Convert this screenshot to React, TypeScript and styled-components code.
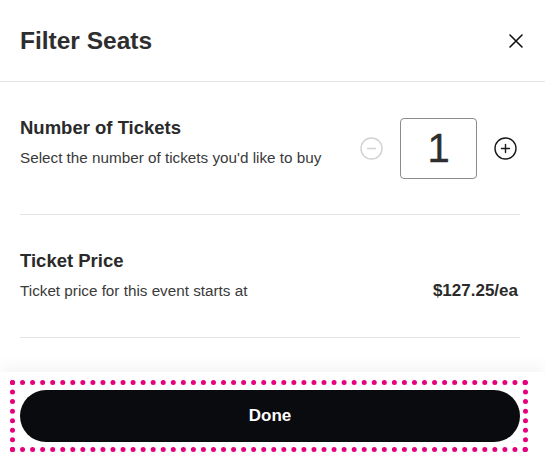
import React, { useState } from 'react';
import styled, { createGlobalStyle } from 'styled-components';

const GlobalStyle = createGlobalStyle`
  html, body {
    margin: 0;
    padding: 0;
    background: #ffffff;
  }
  body {
    font-family: "Liberation Sans", Arial, sans-serif;
    color: #262626;
  }
`;

const Page = styled.div`
  display: flex;
  flex-direction: column;
  height: 100vh;
  background: #fff;
`;

const Header = styled.header`
  display: flex;
  align-items: center;
  justify-content: space-between;
  height: 81px;
  padding: 0 22px 0 20px;
  border-bottom: 1px solid #e4e4e4;
  flex-shrink: 0;
`;

const Title = styled.h1`
  margin: 0;
  font-size: 24.5px;
  font-weight: 700;
  color: #2e2e2e;
`;

const IconButton = styled.button`
  display: flex;
  align-items: center;
  justify-content: center;
  padding: 0;
  border: none;
  background: none;
  cursor: pointer;
  color: ${({ color }) => color || '#111'};
`;

const Content = styled.main`
  flex: 1;
  padding: 0 25px 0 20px;
`;

const Section = styled.section<{ $top: number; $bottom: number }>`
  display: flex;
  align-items: flex-start;
  justify-content: space-between;
  padding: ${({ $top, $bottom }) => `${$top}px 0 ${$bottom}px`};
  border-bottom: 1px solid #e4e4e4;
`;

const TextBlock = styled.div`
  display: flex;
  flex-direction: column;
  gap: 10px;
`;

const SectionTitle = styled.h2`
  margin: 0;
  font-size: 18.5px;
  line-height: 20px;
  font-weight: 700;
  color: #2a2a2a;
`;

const SectionText = styled.p`
  margin: 0;
  font-size: 15.25px;
  line-height: 20px;
  color: #3a3a3a;
`;

const Price = styled.span`
  align-self: flex-end;
  font-size: 17px;
  line-height: 20px;
  font-weight: 700;
  color: #2a2a2a;
  margin-right: 2px;
`;

const Stepper = styled.div`
  display: flex;
  align-items: center;
  gap: 17px;
  margin-right: 3px;
`;

const CountBox = styled.div`
  width: 75px;
  height: 59px;
  border: 1.5px solid #8c8c8c;
  border-radius: 4px;
  display: flex;
  align-items: center;
  justify-content: center;
  font-size: 40px;
  color: #2e2e2e;
  -webkit-text-stroke: 0.4px #2e2e2e;
`;

const Footer = styled.footer`
  flex-shrink: 0;
  padding: 8px 17px 4px 10px;
  background: #fff;
  box-shadow: 0 -6px 14px rgba(0, 0, 0, 0.045);
`;

const FocusRing = styled.div`
  padding: 5px 3px 5px 5px;
  border: 5px dotted #e6007e;
`;

const DoneButton = styled.button`
  display: block;
  width: 100%;
  height: 52px;
  border: none;
  border-radius: 26px;
  background: #0a0b0f;
  color: #fff;
  font-family: "Liberation Sans", Arial, sans-serif;
  font-size: 17px;
  font-weight: 700;
  cursor: pointer;
`;

const CloseIcon = () => (
  <svg width="14" height="14" viewBox="0 0 14 14" fill="none">
    <path d="M1 1L13 13M13 1L1 13" stroke="currentColor" strokeWidth="1.6" strokeLinecap="round" />
  </svg>
);

const CircleIcon = ({ plus }: { plus?: boolean }) => (
  <svg width="23" height="23" viewBox="0 0 23 23" fill="none">
    <circle cx="11.5" cy="11.5" r="10.5" stroke="currentColor" strokeWidth="1.4" />
    <path d="M7.5 11.5H15.5" stroke="currentColor" strokeWidth="1.4" strokeLinecap="round" />
    {plus && <path d="M11.5 7.5V15.5" stroke="currentColor" strokeWidth="1.4" strokeLinecap="round" />}
  </svg>
);

export default function App() {
  const [count, setCount] = useState(1);

  return (
    <Page>
      <GlobalStyle />
      <Header>
        <Title>Filter Seats</Title>
        <IconButton aria-label="Close">
          <CloseIcon />
        </IconButton>
      </Header>
      <Content>
        <Section $top={36} $bottom={35}>
          <TextBlock>
            <SectionTitle>Number of Tickets</SectionTitle>
            <SectionText>Select the number of tickets you'd like to buy</SectionText>
          </TextBlock>
          <Stepper>
            <IconButton color="#d2d2d2" aria-label="Decrease" onClick={() => setCount(Math.max(1, count - 1))}>
              <CircleIcon />
            </IconButton>
            <CountBox>{count}</CountBox>
            <IconButton color="#1a1a1a" aria-label="Increase" onClick={() => setCount(count + 1)}>
              <CircleIcon plus />
            </IconButton>
          </Stepper>
        </Section>
        <Section $top={36} $bottom={36}>
          <TextBlock>
            <SectionTitle>Ticket Price</SectionTitle>
            <SectionText>Ticket price for this event starts at</SectionText>
          </TextBlock>
          <Price>$127.25/ea</Price>
        </Section>
      </Content>
      <Footer>
        <FocusRing>
          <DoneButton>Done</DoneButton>
        </FocusRing>
      </Footer>
    </Page>
  );
}
